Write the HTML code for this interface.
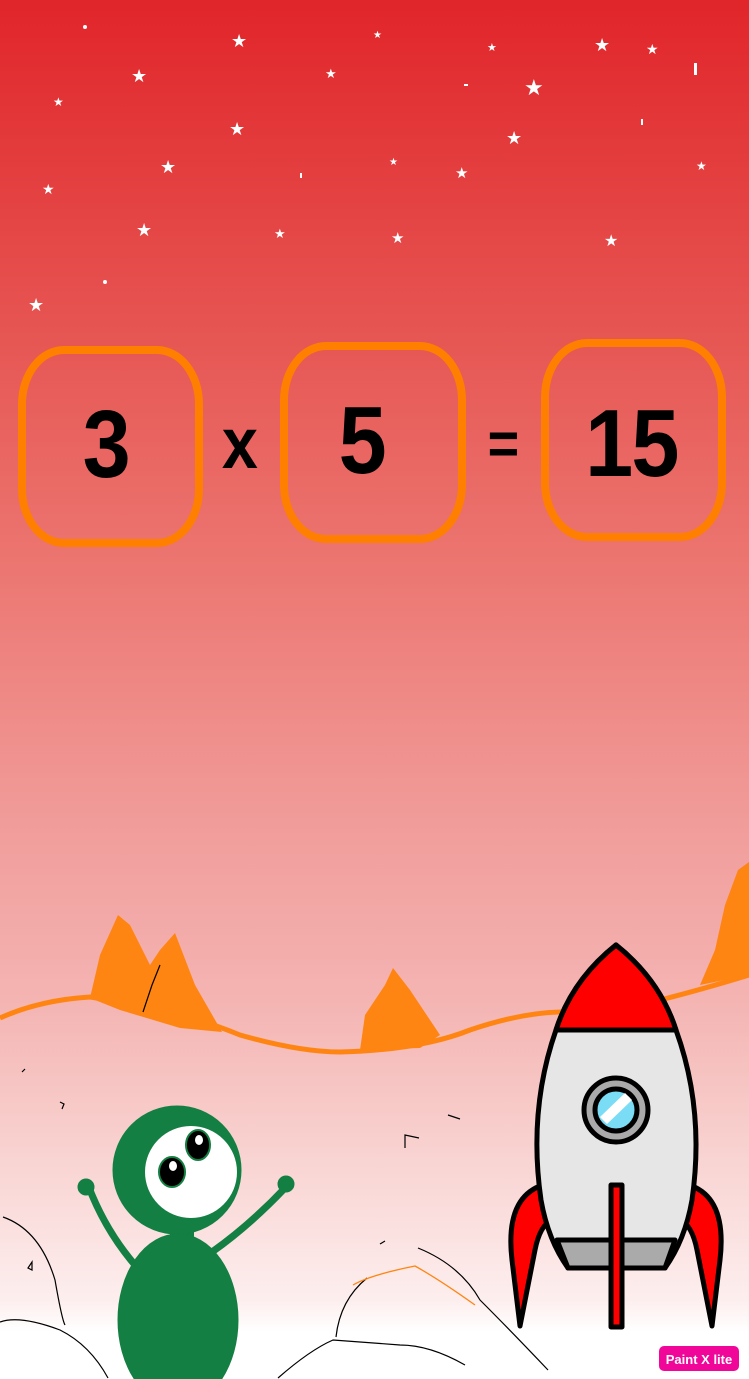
<!DOCTYPE html>
<html><head><meta charset="utf-8"><style>
html,body{margin:0;padding:0}
body{width:749px;height:1379px;position:relative;overflow:hidden;
background:linear-gradient(to bottom,#e1252a 0px,#e65552 330px,#ec7570 560px,#f1a09e 850px,#f4b4b2 1000px,#f8d2d0 1150px,#fdeeee 1300px,#fff 1332px,#fff 1379px);
font-family:"Liberation Sans",sans-serif}
.box{position:absolute;border:8px solid #ff7f00;border-radius:46px/58px;box-sizing:border-box}
.n{position:absolute;font-weight:bold;font-size:96px;color:#000;letter-spacing:-2px;line-height:1;transform:scaleX(0.9)}
</style></head><body>
<svg width="749" height="340" style="position:absolute;left:0;top:0" fill="#fff">
<g font-size="18" font-family="DejaVu Sans">
<text x="231" y="47">★</text><text x="131" y="82">★</text><text x="53" y="106" font-size="12">★</text>
<text x="229" y="135">★</text><text x="160" y="173">★</text><text x="42" y="194" font-size="14">★</text>
<text x="136" y="236">★</text><text x="28" y="311">★</text><text x="325" y="78" font-size="13">★</text>
<text x="274" y="238" font-size="13">★</text><text x="391" y="243" font-size="15">★</text><text x="455" y="178" font-size="15">★</text>
<text x="506" y="144">★</text><text x="594" y="51">★</text><text x="646" y="54" font-size="14">★</text>
<text x="696" y="170" font-size="12">★</text><text x="487" y="51" font-size="11">★</text><text x="389" y="165" font-size="10">★</text>
<text x="524" y="95" font-size="22">★</text><text x="604" y="246" font-size="16">★</text><text x="373" y="38" font-size="10">★</text>
</g>
<circle cx="85" cy="27" r="2"/><circle cx="105" cy="282" r="2"/><rect x="464" y="84" width="4" height="2"/>
<rect x="300" y="173" width="2" height="5"/><rect x="641" y="119" width="2" height="6"/><rect x="694" y="63" width="3" height="12"/>
</svg>
<div class="box" style="left:18px;top:346px;width:185px;height:201px"></div>
<div class="box" style="left:280px;top:342px;width:186px;height:201px"></div>
<div class="box" style="left:541px;top:339px;width:185px;height:202px"></div>
<div class="n" style="left:80px;top:397px">3</div>
<div class="n" style="left:220px;top:408px;font-size:72px">x</div>
<div class="n" style="left:336px;top:393px">5</div>
<div class="n" style="left:486px;top:414px;font-size:60px">=</div>
<div class="n" style="left:580px;top:396px">15</div>
<svg width="749" height="1379" style="position:absolute;left:0;top:0">
<g fill="#ff8512">
<path d="M90 998 L100 955 L118 915 L130 925 L150 965 L160 950 L175 933 L195 985 L222 1032 L180 1028 L120 1010Z"/>
<path d="M360 1050 L365 1015 L385 985 L393 968 L410 990 L440 1035 L420 1048Z"/>
<path d="M700 985 L715 950 L725 905 L738 870 L749 862 L749 975Z"/>
</g>
<path d="M0 1018 Q40 1000 90 997 Q180 1010 240 1035 Q300 1052 340 1052 Q420 1050 470 1030 Q520 1013 560 1012 L660 1000 Q700 990 749 975" stroke="#ff8512" stroke-width="5" fill="none"/>
<path d="M160 965 L152 985 L143 1012" stroke="#000" stroke-width="1.2" fill="none"/>
<g stroke="#000" stroke-width="1.2" fill="none">
<path d="M3 1217 Q40 1230 55 1280 Q62 1320 65 1325"/>
<path d="M0 1322 Q20 1315 60 1330 Q90 1345 108 1378"/>
<path d="M278 1378 Q310 1350 333 1340 L400 1345 Q430 1345 465 1365"/>
<path d="M336 1337 Q340 1300 367 1278"/>
<path d="M418 1248 Q460 1265 480 1300 Q510 1330 548 1370"/>
<path d="M22 1072 l3 -3 M60 1102 l4 2 l-2 5 M405 1148 l0 -13 l14 3 M448 1115 l12 4 M28 1268 l4 -6 l0 8z M380 1244 l5 -3"/>
</g>
<path d="M353 1285 Q370 1275 415 1266 Q440 1280 475 1305" stroke="#ff8512" stroke-width="1.3" fill="none"/>
<g fill="#147f42" stroke="#147f42">
<path d="M88 1185 Q105 1230 135 1265 M212 1252 Q250 1225 285 1188" stroke-width="7" fill="none" stroke-linecap="round"/>
<circle cx="86" cy="1187" r="8"/><circle cx="286" cy="1184" r="8"/>
<rect x="170" y="1225" width="24" height="30" stroke="none"/>
<circle cx="177" cy="1170" r="64"/>
<ellipse cx="178" cy="1320" rx="60" ry="86"/>
</g>
<circle cx="191" cy="1172" r="46" fill="#fff"/>
<ellipse cx="198" cy="1145" rx="12" ry="15" fill="#000" stroke="#147f42" stroke-width="2"/>
<ellipse cx="172" cy="1172" rx="13" ry="15" fill="#000" stroke="#147f42" stroke-width="2"/>
<ellipse cx="199" cy="1140" rx="4" ry="5" fill="#fff"/><ellipse cx="173" cy="1166" rx="4" ry="5" fill="#fff"/>
<g stroke="#000" stroke-width="5" stroke-linejoin="round">
<path d="M540 1186 Q505 1200 512 1260 L520 1326 L535 1250 Q540 1225 552 1220Z" fill="#f00"/>
<path d="M692 1186 Q727 1200 720 1260 L712 1326 L697 1250 Q692 1225 680 1220Z" fill="#f00"/>
<path d="M616 945 Q660 980 676 1030 Q705 1110 692 1200 Q685 1240 665 1268 L568 1268 Q548 1240 541 1200 Q528 1110 556 1030 Q572 980 616 945Z" fill="#e6e6e6"/>
<path d="M616 945 Q660 980 676 1030 L556 1030 Q572 980 616 945Z" fill="#f00"/>
<path d="M557 1240 L675 1240 L665 1268 L568 1268Z" fill="#aaa"/>
<circle cx="616" cy="1110" r="32" fill="#aaa"/>
<circle cx="616" cy="1110" r="21" fill="#7adcf5"/>
<rect x="611" y="1185" width="11" height="142" fill="#f00"/>
</g>
<path d="M600 1117 L625 1093 L632 1100 L607 1124Z" fill="#fff"/>
<rect x="659" y="1346" width="80" height="25" rx="5" fill="#f0079a"/>
<text x="699" y="1364" text-anchor="middle" fill="#fff" font-size="13" font-weight="bold" font-family="Liberation Sans">Paint X lite</text>
</svg>
</body></html>
